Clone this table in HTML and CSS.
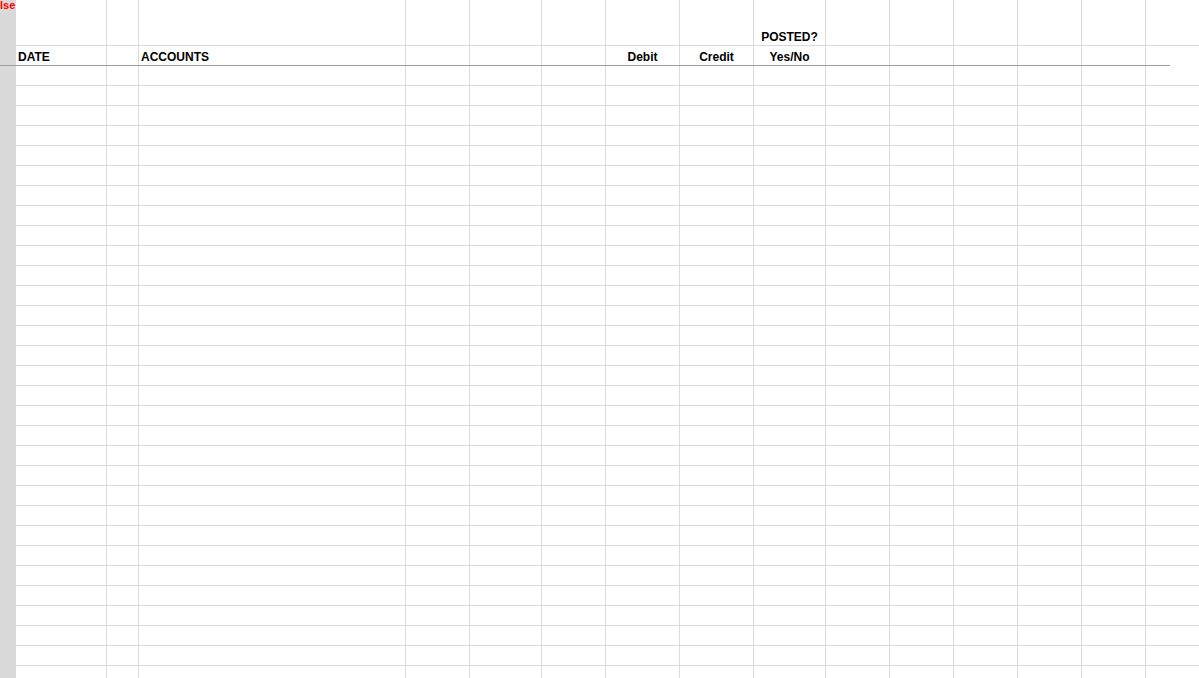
FILE: index.html
```html
<!DOCTYPE html>
<html lang="en">
<head>
    <meta charset="UTF-8">
    <meta name="viewport" content="width=device-width, initial-scale=1.0">
    <title>Journal</title>
    <link rel="stylesheet" href="styles.css">
</head>
<body>

    <div class="sheet">
        <!-- Title row -->
        <div class="row top">
            <div class="gutter"><span class="flag">lse</span></div>
            <div class="cell"></div>
            <div class="cell"></div>
            <div class="cell"></div>
            <div class="cell"></div>
            <div class="cell"></div>
            <div class="cell"></div>
            <div class="cell"></div>
            <div class="cell"></div>
            <div class="cell center">POSTED?</div>
            <div class="cell"></div>
            <div class="cell"></div>
            <div class="cell"></div>
            <div class="cell"></div>
            <div class="cell"></div>
            <div class="cell"></div>
        </div>

        <!-- Column headings -->
        <div class="row head">
            <div class="gutter"></div>
            <div class="cell">DATE</div>
            <div class="cell"></div>
            <div class="cell">ACCOUNTS</div>
            <div class="cell"></div>
            <div class="cell"></div>
            <div class="cell"></div>
            <div class="cell center">Debit</div>
            <div class="cell center">Credit</div>
            <div class="cell center">Yes/No</div>
            <div class="cell"></div>
            <div class="cell"></div>
            <div class="cell"></div>
            <div class="cell"></div>
            <div class="cell"></div>
            <div class="cell"></div>
        </div>

        <!-- Empty entry rows -->
        <div id="entries"></div>
    </div>

    <script>
        const entries = document.getElementById('entries');
        const columns = 15;

        for (let r = 0; r < 31; r++) {
            const row = document.createElement('div');
            row.className = 'row';
            row.innerHTML = '<div class="gutter"></div>' + '<div class="cell"></div>'.repeat(columns);
            entries.appendChild(row);
        }
    </script>

</body>
</html>
```

FILE: styles.css
```css
body {
    margin: 0;
    overflow: hidden;
    background-color: #fff;
    color: #000;
    font-family: "Liberation Sans", Arial, sans-serif;
    font-size: 12px;
    font-weight: bold;
}
.sheet {
    width: 100vw;
    height: 100vh;
    overflow: hidden;
}
.row {
    display: grid;
    grid-template-columns: 16px 91px 32px 267px 64px 72px 64px 74px 74px 72px 64px 64px 64px 64px 64px 64px;
    height: 20px;
}
.row.top {
    height: 46px;
}
.row.head {
    width: 1170px;
    box-sizing: border-box;
    border-bottom: 1px solid #9e9e9e;
}
.gutter {
    background-color: #dadada;
}
.row.top .gutter {
    display: flex;
    align-items: flex-start;
}
.flag {
    color: #ff0000;
    font-size: 11px;
    line-height: 11px;
    margin-top: 0;
    white-space: nowrap;
}
.cell {
    display: flex;
    align-items: flex-end;
    box-sizing: border-box;
    padding: 0 2px 1px;
    border-right: 1px solid #dadada;
    border-bottom: 1px solid #dadada;
    line-height: 14px;
    white-space: nowrap;
}
.row.head .cell {
    border-bottom: none;
}
.center {
    justify-content: center;
}
```
